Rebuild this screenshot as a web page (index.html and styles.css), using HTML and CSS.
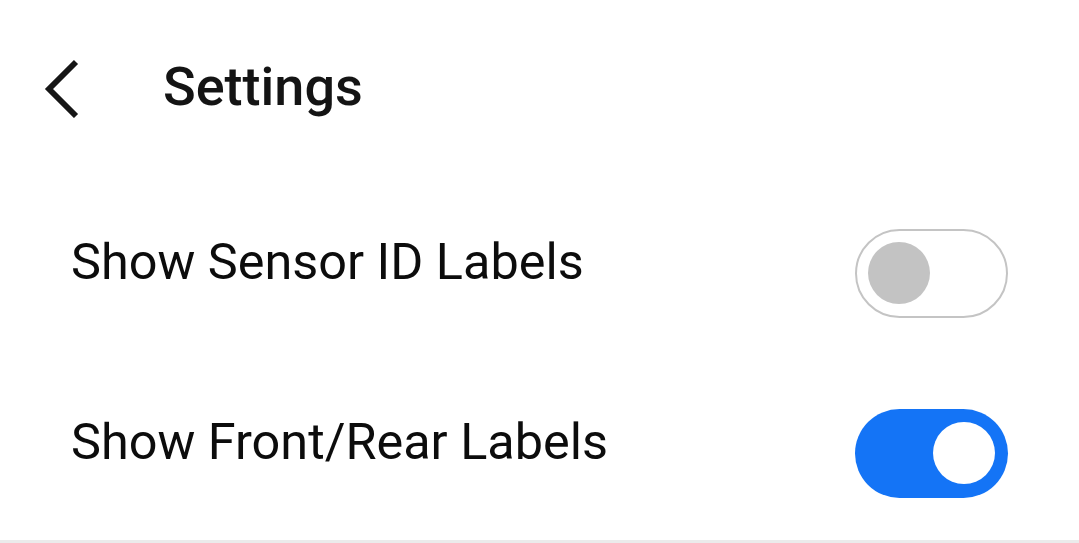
FILE: index.html
```html
<!DOCTYPE html>
<html>
<head>
<meta charset="utf-8">
<link rel="stylesheet" href="styles.css">
</head>
<body>
<div class="screen">
  <header class="topbar">
    <button class="back" aria-label="Back">
      <svg width="40" height="64" viewBox="0 0 40 64"><polyline points="34,8 7,35 34,62" fill="none" stroke="#161616" stroke-width="5.8" stroke-linecap="butt" stroke-linejoin="miter"/></svg>
    </button>
    <h1 class="title">Settings</h1>
  </header>
  <main class="list">
    <div class="row">
      <span class="label">Show Sensor ID Labels</span>
      <div class="toggle off"><div class="thumb"></div></div>
    </div>
    <div class="row">
      <span class="label">Show Front/Rear Labels</span>
      <div class="toggle on"><div class="thumb"></div></div>
    </div>
  </main>
  <div class="bottom-line"></div>
</div>
</body>
</html>
```
FILE: styles.css
```css
html, body {
  margin: 0;
  padding: 0;
  background: #ffffff;
}
.screen {
  width: 1079px;
  height: 543px;
  overflow: hidden;
  display: flex;
  flex-direction: column;
  font-family: Roboto, "Noto Sans", sans-serif;
  color: #111111;
}
.topbar {
  height: 172px;
  flex-shrink: 0;
  display: flex;
  align-items: center;
  padding-left: 42px;
  box-sizing: border-box;
}
.back {
  border: 0;
  background: none;
  padding: 0;
  width: 40px;
  height: 64px;
  display: flex;
}
.title {
  margin: 0 0 0 81px;
  font-size: 54px;
  font-weight: 500;
  color: #141414;
}
.list {
  flex: 1 1 0;
  min-height: 0;
  overflow: hidden;
  display: flex;
  flex-direction: column;
  padding-top: 11px;
}
.row {
  height: 180px;
  flex-shrink: 0;
  display: flex;
  align-items: center;
  justify-content: space-between;
  padding: 0 71px 0 71px;
  box-sizing: border-box;
}
.label {
  font-size: 50.4px;
  font-weight: 400;
  color: #0c0c0c;
  margin-bottom: 23px;
}
.toggle {
  width: 153px;
  height: 89px;
  border-radius: 45px;
  box-sizing: border-box;
  display: flex;
  align-items: center;
  padding: 0 11px;
}
.toggle .thumb {
  width: 62px;
  height: 62px;
  border-radius: 50%;
}
.toggle.off {
  border: 2.5px solid #c4c4c4;
  background: #ffffff;
}
.toggle.off .thumb {
  background: #c3c3c3;
}
.toggle.on {
  background: #1474f6;
  justify-content: flex-end;
  padding: 0 13px;
}
.toggle.on .thumb {
  background: #ffffff;
}
.bottom-line {
  height: 3px;
  background: #ebebeb;
  flex-shrink: 0;
}
```
